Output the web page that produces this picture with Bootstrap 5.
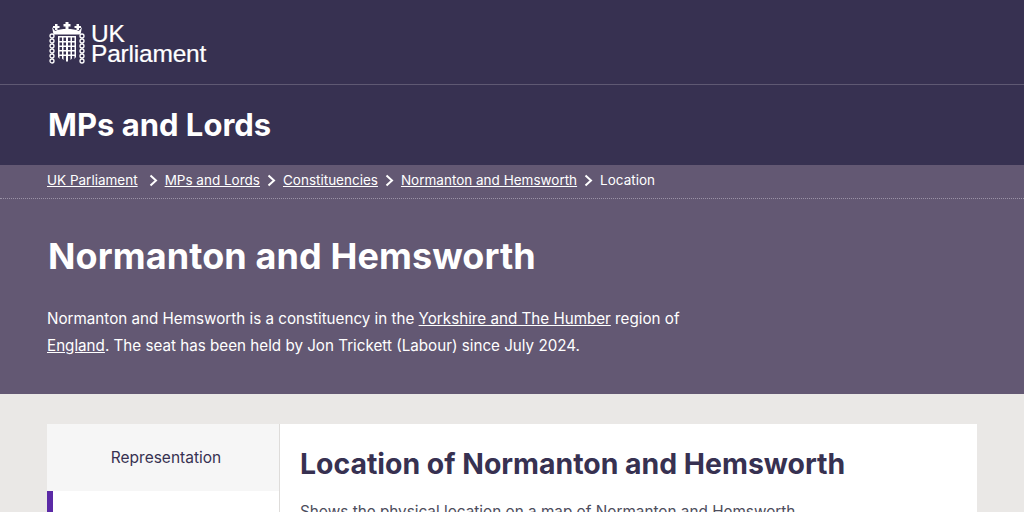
<!doctype html>
<html lang="en"><head><meta charset="utf-8">
<link href="https://cdn.jsdelivr.net/npm/bootstrap@5.3.0/dist/css/bootstrap.min.css" rel="stylesheet">
<style>
html,body{height:512px;overflow:hidden}
body{background:#eae8e6;font-family:"Inter","Noto Sans",sans-serif;color:#fff}
.wrap-x{padding-left:47px;padding-right:47px}
.top-bar{background:#373151}
.logo-row{height:85px;border-bottom:1px solid #5f5973;padding-top:22px}
.logo-mark{margin-left:2px}
.logo-word{font-family:"Liberation Sans",sans-serif;font-size:24.500px;line-height:20px;letter-spacing:-.2px;margin-left:6px;margin-top:2px;-webkit-text-stroke:.2px #fff}
.section-row{height:80px;padding-bottom:2px}
.section-title{font-size:31px;font-weight:700;margin:0;line-height:1;padding-left:1px}
.hero{background:#635873}
.crumbs{height:34px;border-bottom:1px dotted #9a92a6;font-size:13.500px;padding-bottom:2px}
.crumbs a{color:#fff}
.crumb-sep{width:13px;height:13px;margin:0 5px;flex:none}
.crumb-sep.first-sep{margin:0 5px 0 9px}
.hero-title{font-size:36px;font-weight:700;line-height:1;margin:0;padding:39px 0 0 1px;letter-spacing:.1px}
.hero-text{font-size:15.200px;line-height:27px;margin:0;padding-top:31px;padding-bottom:35px;width:680px}
.hero-text a{color:#fff}
.page-body{padding-top:30px}
.panel-box{background:#fff;height:200px}
.side-col{width:233px;border-right:1px solid #dedcda}
.side-item{height:67px;background:#f6f6f6;color:#373151;font-size:15.500px;padding-left:6px}
.side-active{height:40px;border-left:6px solid #5b2aa6}
.main-col{padding:20px}
.main-title{font-size:28.400px;font-weight:700;color:#373151;line-height:1;margin:6px 0 0}
.main-text{color:#4d4d5c;font-size:15.300px;margin:23px 0 0}
</style></head><body>
<header class="top-bar">
<div class="logo-row wrap-x d-flex align-items-start">
<svg class="logo-mark" width="36" height="42" viewBox="0 0 36 42" fill="#fff" aria-hidden="true">
<path d="M16.500 0h3v2h2v2.500h-2V7h-3V4.500h-2V2h2zM6 2h2.500v2h2v2h-2v2H6V6H4V4h2zM27.500 2H30v2h2v2h-2v2h-2.500V6h-2V4h2zM3 5l3 4c3-1.500 7-2 12-2s9 .5 12 2l3-4-1.500 7.500h-27z"/>
<path d="M9 14h18v1.500H9zM9 19h18v1.500H9zM9 23.500h18V25H9zM9 28h18v1.500H9zM9 32.500h18V34H9zM9 14h1.500v23L9 35zM13 14h1.500v24L13 36.500zM17 14h2v25l-1 1-1-1zM21.500 14H23v22.500L21.500 38zM25.500 14H27v21l-1.500 2z"/>
<g fill="none" stroke="#fff" stroke-width="1.300"><circle cx="3" cy="14" r="2"/><circle cx="3" cy="19" r="2"/><circle cx="3" cy="24" r="2"/><circle cx="3" cy="29" r="2"/><circle cx="3" cy="34" r="2"/><circle cx="3" cy="39" r="2"/><circle cx="33" cy="14" r="2"/><circle cx="33" cy="19" r="2"/><circle cx="33" cy="24" r="2"/><circle cx="33" cy="29" r="2"/><circle cx="33" cy="34" r="2"/><circle cx="33" cy="39" r="2"/></g>
</svg>
<div class="logo-word">UK<br>Parliament</div>
</div>
<div class="section-row wrap-x d-flex align-items-center"><h2 class="section-title">MPs and Lords</h2></div>
</header>
<section class="hero">
<nav class="crumbs wrap-x d-flex align-items-center"><a href="#">UK Parliament</a>
<svg class="crumb-sep first-sep" viewBox="0 0 13 13" aria-hidden="true"><path d="M3.500 1.500 9 6.500l-5.500 5" fill="none" stroke="#fff" stroke-width="2"/></svg><a href="#">MPs and Lords</a>
<svg class="crumb-sep" viewBox="0 0 13 13" aria-hidden="true"><path d="M3.500 1.500 9 6.500l-5.500 5" fill="none" stroke="#fff" stroke-width="2"/></svg><a href="#">Constituencies</a>
<svg class="crumb-sep" viewBox="0 0 13 13" aria-hidden="true"><path d="M3.500 1.500 9 6.500l-5.500 5" fill="none" stroke="#fff" stroke-width="2"/></svg><a href="#">Normanton and Hemsworth</a>
<svg class="crumb-sep" viewBox="0 0 13 13" aria-hidden="true"><path d="M3.500 1.500 9 6.500l-5.500 5" fill="none" stroke="#fff" stroke-width="2"/></svg><span>Location</span></nav>
<div class="wrap-x">
<h1 class="hero-title">Normanton and Hemsworth</h1>
<p class="hero-text">Normanton and Hemsworth is a constituency in the <a href="#">Yorkshire and The Humber</a> region of<br><a href="#">England</a>. The seat has been held by Jon Trickett (Labour) since July 2024.</p>
</div>
</section>
<main class="page-body wrap-x">
<div class="panel-box d-flex">
<div class="side-col flex-shrink-0"><div class="side-item d-flex align-items-center justify-content-center">Representation</div><div class="side-active"></div></div>
<div class="main-col"><h2 class="main-title">Location of Normanton and Hemsworth</h2><p class="main-text">Shows the physical location on a map of Normanton and Hemsworth.</p></div>
</div>
</main>
</body></html>
